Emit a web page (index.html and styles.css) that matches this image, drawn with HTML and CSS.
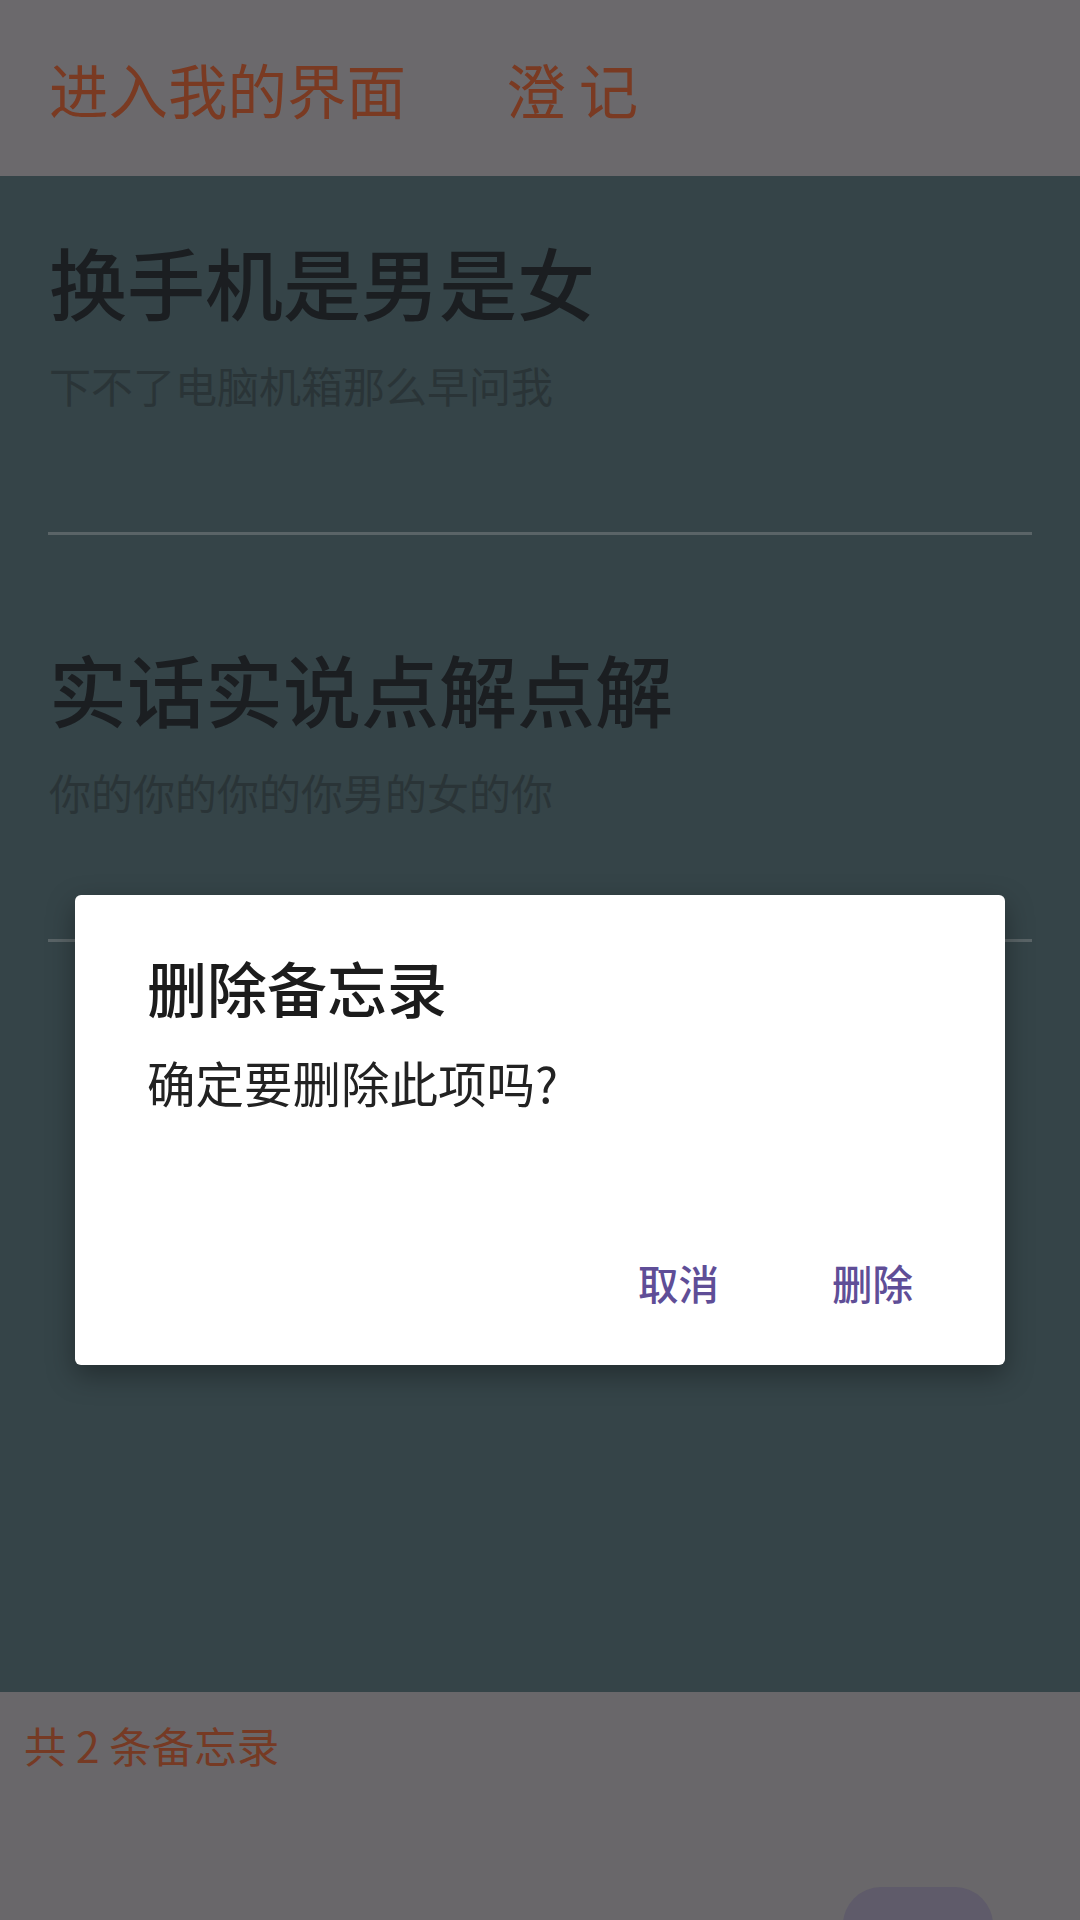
FILE: index.html
```html
<!DOCTYPE html>
<html lang="zh-CN">
<head>
<meta charset="utf-8">
<title>备忘录</title>
<link rel="stylesheet" href="styles.css">
</head>
<body>
<div class="screen">
  <header class="topbar">
    <span class="top-link">进入我的界面</span>
    <span class="top-link">澄 记</span>
  </header>
  <main class="list">
    <div class="item">
      <div class="item-title">换手机是男是女</div>
      <div class="item-sub">下不了电脑机箱那么早问我</div>
    </div>
    <div class="divider"></div>
    <div class="item">
      <div class="item-title">实话实说点解点解</div>
      <div class="item-sub">你的你的你的你男的女的你</div>
    </div>
    <div class="divider"></div>
  </main>
  <footer class="bottombar">
    <span class="count">共 2 条备忘录</span>
    <div class="fab"></div>
  </footer>
  <div class="overlay">
    <div class="dialog">
      <div class="dialog-title">删除备忘录</div>
      <div class="dialog-msg">确定要删除此项吗?</div>
      <div class="dialog-actions">
        <span class="btn">取消</span>
        <span class="btn">删除</span>
      </div>
    </div>
  </div>
</div>
</body>
</html>
```
FILE: styles.css
```css
html, body {
  margin: 0;
  padding: 0;
}
body {
  width: 1080px;
  height: 1920px;
  overflow: hidden;
  font-family: "Noto Sans CJK SC", "Noto Sans", sans-serif;
  background: #354448;
}
.screen {
  position: relative;
  width: 1080px;
  height: 1920px;
  display: flex;
  flex-direction: column;
}
.topbar {
  height: 176px;
  flex: none;
  background: #6b696c;
  display: flex;
  align-items: center;
  gap: 100px;
  padding-left: 49px;
  box-sizing: border-box;
}
.top-link {
  font-size: 59.5px;
  line-height: 80px;
  color: #7a3a22;
  white-space: pre;
}
.list {
  flex: 1;
  background: #354448;
  display: flex;
  flex-direction: column;
}
.item {
  padding: 55px 48px 119px 49px;
}
.divider {
  height: 3px;
  margin: 0 48px 48px 48px;
  background: #5a6467;
}
.item-title {
  font-size: 78px;
  line-height: 100px;
  color: #1b1e21;
  font-weight: 500;
}
.item-sub {
  margin-top: 26px;
  font-size: 42px;
  line-height: 56px;
  color: #2a3437;
}
.bottombar {
  position: relative;
  height: 228px;
  flex: none;
  background: #69676a;
  padding: 25px 0 0 24px;
  box-sizing: border-box;
}
.count {
  font-size: 42.5px;
  line-height: 56px;
  color: #763a24;
}
.fab {
  position: absolute;
  left: 843px;
  top: 195px;
  width: 150px;
  height: 100px;
  border-radius: 38px;
  background: #5f5b6a;
}
.overlay {
  position: absolute;
  inset: 0;
  display: flex;
  justify-content: center;
  align-items: flex-start;
  padding-top: 895px;
  box-sizing: border-box;
}
.dialog {
  width: 930px;
  height: 470px;
  box-sizing: border-box;
  background: #ffffff;
  border-radius: 6px;
  box-shadow: 0 10px 28px rgba(0, 0, 0, 0.35);
  padding: 54px 92px 54px 72px;
  display: flex;
  flex-direction: column;
}
.dialog-title {
  font-size: 60px;
  line-height: 76px;
  font-weight: 500;
  color: #1c1c1c;
}
.dialog-msg {
  margin-top: 26px;
  font-size: 48.5px;
  line-height: 62px;
  color: #222222;
}
.dialog-actions {
  margin-top: auto;
  display: flex;
  justify-content: flex-end;
  gap: 113px;
}
.btn {
  font-size: 40.5px;
  line-height: 56px;
  font-weight: 500;
  color: #5f4e97;
}
```
